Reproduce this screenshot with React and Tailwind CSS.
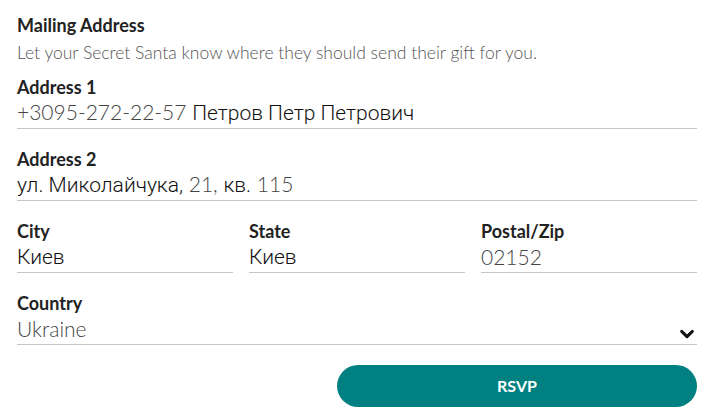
const LAT = 'font-[Lato] font-light text-[#444]';
const CYR = 'font-[Roboto] font-light text-[#111]';

const Field = ({ label, children, select, className = '' }) => (
  <div className={`flex flex-col ${className}`}>
    <span className="text-[18px] leading-[20px] font-bold text-[#222]">{label}</span>
    <div className="flex h-[32px] items-center justify-between border-b border-[#c3c8cc]">
      <span className="text-[21px] whitespace-pre">{children}</span>
      {select && (
        <svg width="16" height="16" viewBox="0 0 24 24" className="mr-[2px] mt-[10px]">
          <path d="M4 8l8 8 8-8" fill="none" stroke="#111" strokeWidth="4.5" strokeLinecap="round" strokeLinejoin="round" />
        </svg>
      )}
    </div>
  </div>
);

export default function App() {
  return (
    <div
      className="w-[713px] h-[419px] bg-white pl-[17px] pr-[16px] pt-[15px]"
      style={{ fontFamily: 'Lato, Roboto, "Noto Sans", sans-serif' }}
    >
      {/* 헤더 */}
      <h2 className="text-[18px] leading-[20px] font-bold text-[#222]">Mailing Address</h2>
      <p className="mt-[8px] text-[17.5px] leading-[20px] font-light text-[#555]">
        Let your Secret Santa know where they should send their gift for you.
      </p>

      <Field label="Address 1" className="mt-[14px]">
        <span className={LAT}>+3095-272-22-57 </span>
        <span className={CYR}>Петров Петр Петрович</span>
      </Field>
      <Field label="Address 2" className="mt-[20px]">
        <span className={CYR}>ул. Миколайчука,</span>
        <span className={LAT}> 21, </span>
        <span className={CYR}>кв.</span>
        <span className={LAT}> 115</span>
      </Field>

      <div className="mt-[20px] grid grid-cols-3 gap-[16px]">
        <Field label="City"><span className={CYR}>Киев</span></Field>
        <Field label="State"><span className={CYR}>Киев</span></Field>
        <Field label="Postal/Zip"><span className={LAT}>02152</span></Field>
      </div>

      <Field label="Country" select className="mt-[20px]">
        <span className={LAT}>Ukraine</span>
      </Field>

      <div className="mt-[20px] flex justify-end">
        <button className="h-[42px] w-[360px] rounded-full bg-[#008080] text-[16px] font-bold text-white">
          RSVP
        </button>
      </div>
    </div>
  );
}
